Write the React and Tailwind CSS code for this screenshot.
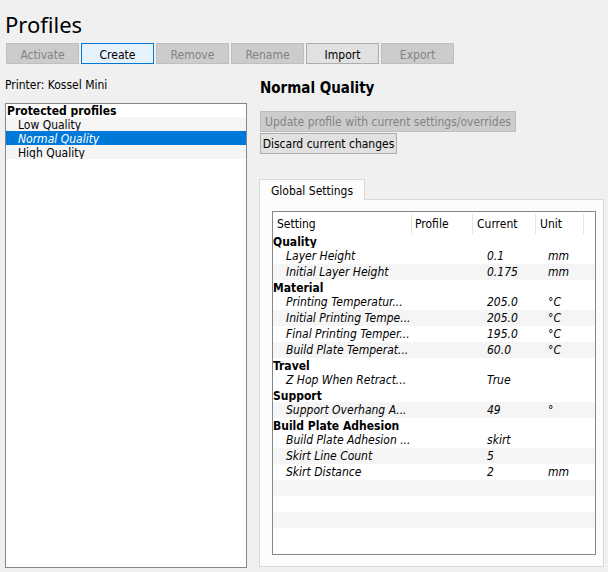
import React from "react";

const F = "font-['DejaVu_Sans_Condensed','DejaVu_Sans',sans-serif] font-stretch-condensed";

const topButtons = [
  { label: "Activate", state: "disabled" },
  { label: "Create", state: "focus" },
  { label: "Remove", state: "disabled" },
  { label: "Rename", state: "disabled" },
  { label: "Import", state: "normal" },
  { label: "Export", state: "disabled" },
];

const btnCls = {
  disabled: "bg-[#cccccc] border-[#bfbfbf] text-[#838383]",
  focus: "bg-[#e5f1fb] border-[#0078d7] text-black",
  normal: "bg-[#e1e1e1] border-[#adadad] text-black",
};

const sections = [
  {
    name: "Quality",
    items: [
      ["Layer Height", "0.1", "mm"],
      ["Initial Layer Height", "0.175", "mm"],
    ],
  },
  {
    name: "Material",
    items: [
      ["Printing Temperatur...", "205.0", "°C"],
      ["Initial Printing Tempe...", "205.0", "°C"],
      ["Final Printing Temper...", "195.0", "°C"],
      ["Build Plate Temperat...", "60.0", "°C"],
    ],
  },
  { name: "Travel", items: [["Z Hop When Retract...", "True", ""]] },
  { name: "Support", items: [["Support Overhang A...", "49", "°"]] },
  {
    name: "Build Plate Adhesion",
    items: [
      ["Build Plate Adhesion ...", "skirt", ""],
      ["Skirt Line Count", "5", ""],
      ["Skirt Distance", "2", "mm"],
    ],
  },
];

function TableBody() {
  const rows = [];
  let idx = 0;
  sections.forEach((s) => {
    rows.push(
      <div key={s.name} className="h-[14px] leading-[16px] overflow-hidden font-bold text-black whitespace-nowrap">
        {s.name}
      </div>
    );
    s.items.forEach(([n, v, u]) => {
      const odd = idx % 2 === 1;
      rows.push(
        <div
          key={n}
          className={`h-[16px] leading-[16px] flex italic text-black whitespace-nowrap ${odd ? "bg-[#f5f5f5]" : "bg-white"}`}
        >
          <div className="w-[214px] pl-[13px]">{n}</div>
          <div className="w-[61px]">{v}</div>
          <div className="flex-1">{u}</div>
        </div>
      );
      idx++;
    });
  });
  for (let i = 0; i < 3; i++) {
    const odd = idx % 2 === 1;
    rows.push(<div key={"f" + i} className={`h-[16px] ${odd ? "bg-[#f5f5f5]" : "bg-white"}`} />);
    idx++;
  }
  return <div className="flex flex-col">{rows}</div>;
}

export default function App() {
  return (
    <div className={`w-[608px] h-[572px] bg-[#f0f0f0] overflow-hidden text-[12px] text-black ${F}`}>
      <div className="h-[43px] pt-[9px] pl-[5px] font-['Noto_Sans',sans-serif] font-stretch-normal text-[22px] leading-[30px]">
        Profiles
      </div>
      <div className="flex gap-[2px] pl-[6px] h-[21px]">
        {topButtons.map((b) => (
          <div
            key={b.label}
            className={`w-[73px] h-[21px] border pt-[2px] flex items-center justify-center ${btnCls[b.state]}`}
          >
            {b.label}
          </div>
        ))}
      </div>
      <div className="flex pl-[5px]">
        <div className="w-[242px] flex flex-col">
          <div className="mt-[14px] h-[14px] leading-[14px]">Printer: Kossel Mini</div>
          <div className="mt-[11px] h-[465px] border border-[#828790] bg-white flex flex-col">
            <div className="h-[13px] leading-[15px] overflow-hidden pl-[1px] font-bold">Protected profiles</div>
            <div className="h-[14px] leading-[16px] overflow-hidden pl-[12px] bg-[#f5f5f5]">Low Quality</div>
            <div className="h-[14px] leading-[16px] overflow-hidden pl-[12px] bg-[#0078d7] text-white italic">Normal Quality</div>
            <div className="h-[14px] leading-[16px] overflow-hidden pl-[12px] bg-[#f5f5f5]">High Quality</div>
          </div>
        </div>
        <div className="ml-[12px] w-[345px] flex flex-col">
          <div className="mt-[15px] h-[18px] leading-[18px] pl-[1px] font-bold text-[15px]">Normal Quality</div>
          <div className="mt-[14px] ml-[1px] w-[256px] h-[21px] border pt-[1px] bg-[#cccccc] border-[#bfbfbf] text-[#838383] flex items-center justify-center whitespace-nowrap">
            Update profile with current settings/overrides
          </div>
          <div className="mt-[1px] ml-[1px] w-[137px] h-[21px] border pt-[1px] bg-[#e1e1e1] border-[#adadad] flex items-center justify-center whitespace-nowrap">
            Discard current changes
          </div>
          <div className="mt-[25px] relative z-10 -mb-[1px] w-[106px] h-[21px] border border-b-0 pt-[2px] border-[#d9d9d9] bg-[#fcfcfc] flex items-center justify-center">
            Global Settings
          </div>
          <div className="h-[368px] border border-[#d9d9d9] bg-[#fcfcfc] pl-[12px] pt-[11px]">
            <div className="w-[324px] h-[344px] border border-[#828790] bg-white flex flex-col">
              <div className="h-[22px] flex bg-white pt-[2px]">
                <div className="w-[139px] border-r border-[#e5e5e5] pl-[4px] flex items-center">Setting</div>
                <div className="w-[61px] border-r border-[#e5e5e5] pl-[3px] flex items-center">Profile</div>
                <div className="w-[63px] border-r border-[#e5e5e5] pl-[4px] flex items-center">Current</div>
                <div className="w-[48px] border-r border-[#e5e5e5] pl-[4px] flex items-center">Unit</div>
                <div className="flex-1" />
              </div>
              <TableBody />
            </div>
          </div>
        </div>
      </div>
    </div>
  );
}
